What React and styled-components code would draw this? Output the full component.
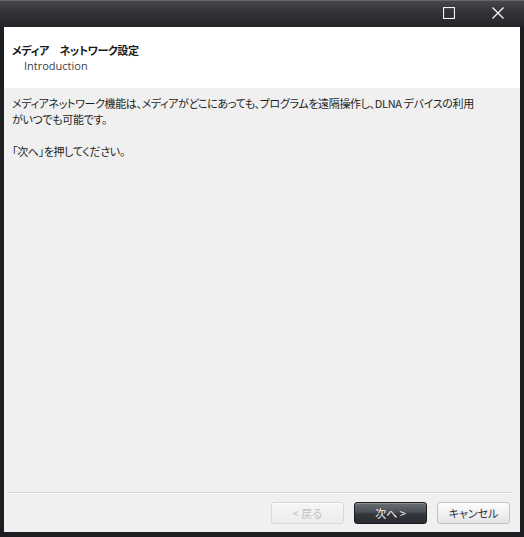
import React from 'react';
import styled, { createGlobalStyle } from "styled-components";

const GlobalStyle = createGlobalStyle`
    html, body {
        margin: 0;
        padding: 0;
        background: #1d1e21;
    }
`;

const App = () => {
    return (
        <Window>
            <GlobalStyle />
            <TitleBar>
                <CaptionButton aria-label="maximize">
                    <svg width="12" height="12" viewBox="0 0 12 12">
                        <rect x="0.5" y="0.5" width="11" height="11" fill="none" stroke="#f4f4f4" strokeWidth="1.2" />
                    </svg>
                </CaptionButton>
                <CaptionButton aria-label="close">
                    <svg width="12" height="12" viewBox="0 0 12 12">
                        <path d="M0.5 0.5 L11.5 11.5 M11.5 0.5 L0.5 11.5" stroke="#f4f4f4" strokeWidth="1.4" />
                    </svg>
                </CaptionButton>
            </TitleBar>
            <Frame>
                <Header>
                    <Title>メディア　ネットワーク設定</Title>
                    <SubTitle>Introduction</SubTitle>
                </Header>
                <Body>
                    <Text>
                        メディアネットワーク機能は、メディアがどこにあっても、プログラムを遠隔操作し、DLNA デバイスの利用<br />
                        がいつでも可能です。
                    </Text>
                    <Text>「次へ」を押してください。</Text>
                </Body>
                <Footer>
                    <Separator />
                    <ButtonRow>
                        <WizardButton variant="disabled" disabled>&lt; 戻る</WizardButton>
                        <WizardButton variant="primary">次へ &gt;</WizardButton>
                        <WizardButton>キャンセル</WizardButton>
                    </ButtonRow>
                </Footer>
            </Frame>
        </Window>
    )
}

export default App;

//Window shell

const Window = styled.div`
    width: 524px;
    height: 537px;
    display: flex;
    flex-direction: column;
    background: #1d1e21;
    font-family: "Noto Sans CJK JP", "Noto Sans", sans-serif;
    font-feature-settings: "palt";
`;

const TitleBar = styled.div`
    height: 27px;
    flex: none;
    display: flex;
    justify-content: flex-end;
    align-items: flex-start;
    padding-right: 15px;
    gap: 26px;
    box-sizing: border-box;
    border-top: 1px solid #64666a;
    background: linear-gradient(#45474b 0%, #34363a 35%, #222428 100%);
`;

const CaptionButton = styled.div`
    width: 23px;
    height: 24px;
    display: flex;
    align-items: center;
    justify-content: center;
`;

const Frame = styled.div`
    flex: 1;
    display: flex;
    flex-direction: column;
    margin: 0 4px 5px 4px;
    background: #f0f0f0;
`;

//Header

const Header = styled.div`
    height: 61px;
    box-sizing: border-box;
    background: #ffffff;
    padding: 15px 0 0 8px;
`;

const Title = styled.div`
    font-size: 11px;
    line-height: 16px;
    font-weight: 700;
    color: #1a1a1a;
    letter-spacing: -0.4px;
`;

const SubTitle = styled.div`
    font-size: 11px;
    line-height: 16px;
    color: #3c3c46;
    padding-left: 12px;
    font-family: "Open Sans", "Noto Sans", sans-serif;
`;

//Body

const Body = styled.div`
    flex: 1;
    padding: 7px 8px 0 8px;
`;

const Text = styled.p`
    margin: 0 0 16px 0;
    font-size: 11px;
    line-height: 16px;
    color: #1e1e1e;
    letter-spacing: -0.35px;
    white-space: nowrap;
`;

//Footer

const Footer = styled.div`
    padding: 0 10px 8px 4px;
`;

const Separator = styled.div`
    height: 1px;
    margin-right: -3px;
    background: #d6d6d6;
    border-bottom: 1px solid #fbfbfb;
    margin-bottom: 8px;
`;

const ButtonRow = styled.div`
    display: flex;
    justify-content: flex-end;
    gap: 10px;
`;

const WizardButton = styled.button`
    width: 73px;
    height: 22px;
    padding: 0;
    border-radius: 3px;
    font-family: "Noto Sans CJK JP", sans-serif;
    font-feature-settings: "palt";
    font-size: 11px;
    line-height: 18px;
    cursor: default;
    border: 1px solid ${p => p.variant === "primary" ? "#1c1d20" : p.variant === "disabled" ? "#d8d8d8" : "#c2c2c2"};
    color: ${p => p.variant === "primary" ? "#f2f2f2" : p.variant === "disabled" ? "#c4c4c4" : "#2c3040"};
    background: ${p => p.variant === "primary"
        ? "linear-gradient(#6a6e75 0%, #4b4f56 45%, #33363c 55%, #2a2c31 100%)"
        : p.variant === "disabled"
            ? "linear-gradient(#f6f6f6, #ececec)"
            : "linear-gradient(#fdfdfd 0%, #f1f1f1 50%, #e4e4e4 100%)"};
    box-shadow: ${p => p.variant === "primary" ? "inset 0 1px 0 #8a8d93" : "inset 0 1px 0 #ffffff"};
`;
